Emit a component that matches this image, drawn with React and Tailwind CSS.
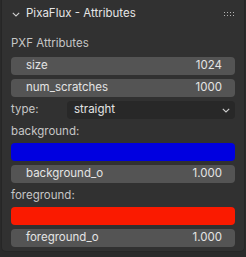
import React from 'react';

const font = { fontFamily: 'Inter, "DejaVu Sans", sans-serif' };

const NumberField = ({ label, value }) => (
    <div className="h-[18px] rounded-[4px] bg-[#545454] flex items-center justify-between pl-[15px] pr-[13px] text-[11.5px] text-[#e4e4e4]">
        <span>{label}</span>
        <span>{value}</span>
    </div>
);

const Chevron = ({ className }) => (
    <svg width="8" height="5" viewBox="0 0 8 5" className={className}>
        <path d="M0.8 0.8 L4 4 L7.2 0.8" fill="none" stroke="currentColor" strokeWidth="1.1" />
    </svg>
);

const Grip = () => (
    <div className="grid grid-cols-4 gap-x-[2px] gap-y-[2px]">
        {[0, 1, 2, 3, 4, 5, 6, 7].map((i) => (
            <div key={i} className="w-[1px] h-[1px] bg-[#b4b4b4]" />
        ))}
    </div>
);

export default function App() {
    return (
        <div className="w-[246px] h-[257px] bg-[#2a2a2a] px-[1px]" style={font}>
            <div className="h-[252px] rounded-b-[5px] bg-[#313131] border-x border-b border-[#262626]">
                <div className="h-[28px] flex items-center pl-[10px] pr-[10px] text-[11.5px] text-[#e6e6e6]">
                    <Chevron className="text-[#cfcfcf] mr-[6px]" />
                    <span className="flex-1">PixaFlux - Attributes</span>
                    <Grip />
                </div>
                <div className="px-[9px] pt-[7px] flex flex-col text-[11.5px]">
                    <div className="h-[18px] flex items-center text-[#c6c6c6]">PXF Attributes</div>
                    <div className="mt-[4px]">
                        <NumberField label="size" value="1024" />
                    </div>
                    <div className="mt-[4px]">
                        <NumberField label="num_scratches" value="1000" />
                    </div>
                    <div className="mt-[4px] h-[18px] flex items-center">
                        <span className="w-[56px] text-[#c6c6c6]">type:</span>
                        <div className="flex-1 h-full rounded-[4px] bg-[#282828] flex items-center justify-between pl-[7px] pr-[5px] text-[#e4e4e4]">
                            <span>straight</span>
                            <Chevron className="text-[#d0d0d0]" />
                        </div>
                    </div>
                    <div className="mt-[4px] h-[18px] flex items-center text-[#c6c6c6]">background:</div>
                    <div className="mt-[2px] h-[18px] rounded-[4px] bg-[#0000e0]" />
                    <div className="mt-[4px]">
                        <NumberField label="background_o" value="1.000" />
                    </div>
                    <div className="mt-[4px] h-[18px] flex items-center text-[#c6c6c6]">foreground:</div>
                    <div className="mt-[2px] h-[18px] rounded-[4px] bg-[#fa1a00]" />
                    <div className="mt-[4px]">
                        <NumberField label="foreground_o" value="1.000" />
                    </div>
                </div>
            </div>
        </div>
    );
}
